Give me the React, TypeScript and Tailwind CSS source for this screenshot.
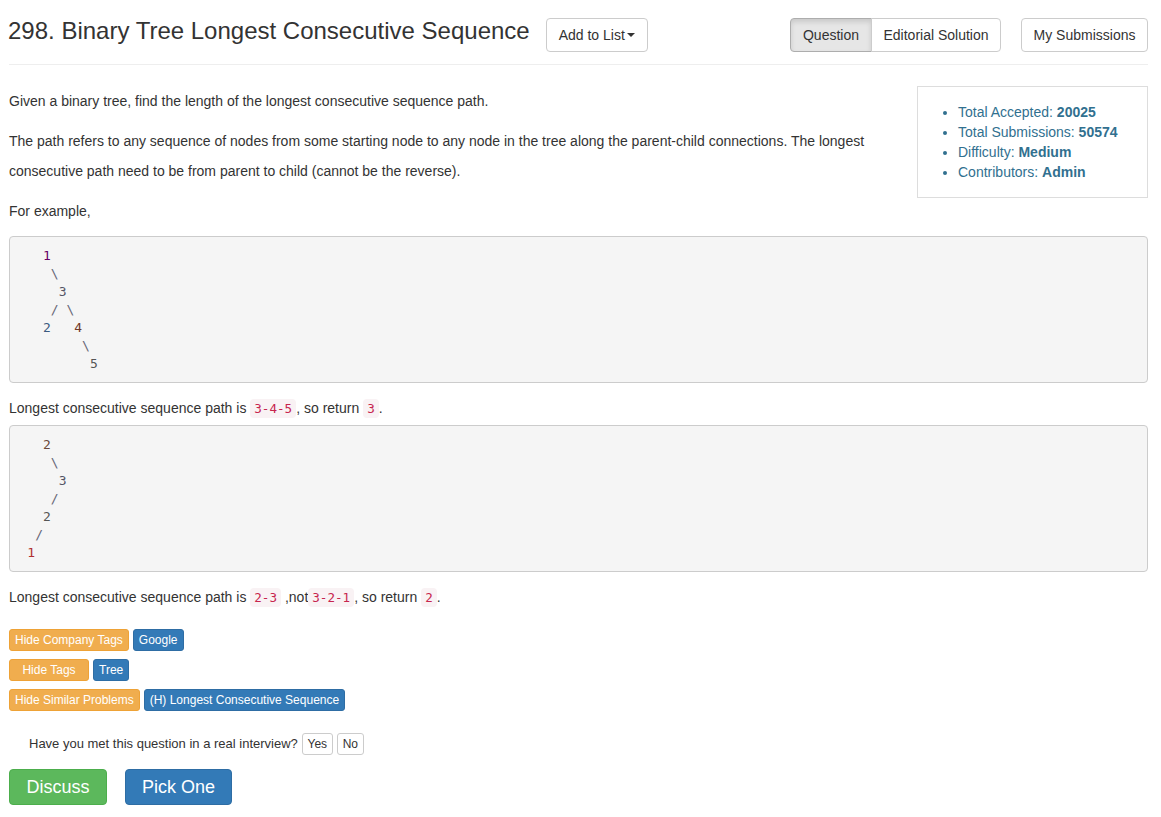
import React from "react";

const code = "px-[4px] py-[2px] rounded-[4px] bg-[#f9f2f4] text-[#c7254e] text-[12.6px] leading-[14px] [font-family:'DejaVu_Sans_Mono',monospace]";

function Pre({ lines, className = "" }: { lines: React.ReactNode[]; className?: string }) {
  return (
    <pre className={"bg-[#f5f5f5] border border-[#ccc] rounded-[4px] px-[9.5px] py-[9.5px] text-[13px] leading-[18px] text-[#555] [font-family:'DejaVu_Sans_Mono',monospace] whitespace-pre overflow-hidden " + className}>
      {lines.map((l, i) => (
        <div key={i}>{l}</div>
      ))}
    </pre>
  );
}

export default function App() {
  return (
    <div className="min-h-[817px] bg-white text-[#333] text-[14px] [font-family:'Liberation_Sans',Arial,sans-serif] pl-[9px] pr-[13px]">
      {/* header */}
      <div className="flex items-start pt-[14px] pb-[12px] border-b border-[#eee]">
        <h3 className="text-[24px] leading-[34px] text-[#333] -ml-[1px]">298. Binary Tree Longest Consecutive Sequence</h3>
        <button className="mt-[4px] ml-[16px] h-[34px] px-[12px] border border-[#ccc] rounded-[4px] bg-white text-[14px] text-[#333] flex items-center">
          Add to List
          <span className="ml-[2px] inline-block w-0 h-0 border-l-[4px] border-r-[4px] border-t-[4px] border-l-transparent border-r-transparent border-t-[#333]"></span>
        </button>
        <div className="flex-1" />
        <div className="mt-[4px] flex">
          <button className="h-[34px] w-[82px] border border-[#adadad] rounded-l-[4px] bg-[#e6e6e6] shadow-[inset_0_3px_5px_rgba(0,0,0,0.125)] text-[14px] text-[#333]">Question</button>
          <button className="h-[34px] w-[130px] -ml-[1px] border border-[#ccc] rounded-r-[4px] bg-white text-[14px] text-[#333]">Editorial Solution</button>
        </div>
        <button className="mt-[4px] ml-[20px] h-[34px] w-[127px] border border-[#ccc] rounded-[4px] bg-white text-[14px] text-[#333]">My Submissions</button>
      </div>

      {/* body */}
      <div className="pt-[21px]">
        <div className="float-right ml-[20px] w-[231px] border border-[#ddd] py-[15px]">
          <ul className="list-disc pl-[40px] text-[#31708f] leading-[20px] text-[14px]">
            <li>Total Accepted: <b>20025</b></li>
            <li>Total Submissions: <b>50574</b></li>
            <li>Difficulty: <b>Medium</b></li>
            <li>Contributors: <b>Admin</b></li>
          </ul>
        </div>
        <p className="leading-[30px] mb-[10px]">Given a binary tree, find the length of the longest consecutive sequence path.</p>
        <p className="leading-[30px] mb-[10px]">
          The path refers to any sequence of nodes from some starting node to any node in the tree along the parent-child connections. The longest consecutive path need to be from parent to child (cannot be the reverse).
        </p>
        <p className="leading-[30px] mb-[10px]">For example,</p>
        <div className="clear-both" />
        <Pre
          className="mb-[10px]"
          lines={[
            <>
              {"   "}
              <span className="text-[#606]">1</span>
            </>,
            <span className="text-[#667]">{"    \\"}</span>,
            <>
              {"     "}
              <span className="text-[#556]">3</span>
            </>,
            <span className="text-[#667]">{"    / \\"}</span>,
            <>
              {"   "}
              <span className="text-[#3b5a80]">2</span>
              {"   "}
              <span className="text-[#703828]">4</span>
            </>,
            <span className="text-[#667]">{"        \\"}</span>,
            <>
              {"         "}
              <span className="text-[#555]">5</span>
            </>,
          ]}
        />
        <p className="leading-[30px] mb-[2px]">
          Longest consecutive sequence path is <code className={code}>3-4-5</code>, so return <code className={code}>3</code>.
        </p>
        <Pre
          lines={[
            <>
              {"   "}
              <span className="text-[#6b4a3a]">2</span>
            </>,
            <span className="text-[#667]">{"    \\"}</span>,
            <>
              {"     "}
              <span className="text-[#556]">3</span>
            </>,
            <span className="text-[#667]">{"    /"}</span>,
            <>
              {"   "}
              <span className="text-[#555]">2</span>
            </>,
            <span className="text-[#667]">{"  /"}</span>,
            <>
              {" "}
              <span className="text-[#b03030]">1</span>
            </>,
          ]}
        />
        <p className="leading-[30px] mt-[10px]">
          Longest consecutive sequence path is <code className={code}>2-3</code> ,not<code className={code}>3-2-1</code>, so return <code className={code}>2</code>.
        </p>

        {/* tags */}
        <div className="mt-[17px] flex flex-col gap-[8px] text-[12px]">
          <div className="flex gap-[4px]">
            <span className="h-[22px] px-[5px] leading-[20px] rounded-[3px] bg-[#f0ad4e] border border-[#eea236] text-white">Hide Company Tags</span>
            <span className="h-[22px] px-[5px] leading-[20px] rounded-[3px] bg-[#337ab7] border border-[#2e6da4] text-white">Google</span>
          </div>
          <div className="flex gap-[4px]">
            <span className="h-[22px] w-[80px] text-center leading-[20px] rounded-[3px] bg-[#f0ad4e] border border-[#eea236] text-white">Hide Tags</span>
            <span className="h-[22px] px-[5px] leading-[20px] rounded-[3px] bg-[#337ab7] border border-[#2e6da4] text-white">Tree</span>
          </div>
          <div className="flex gap-[4px]">
            <span className="h-[22px] px-[5px] leading-[20px] rounded-[3px] bg-[#f0ad4e] border border-[#eea236] text-white">Hide Similar Problems</span>
            <span className="h-[22px] px-[5px] leading-[20px] rounded-[3px] bg-[#337ab7] border border-[#2e6da4] text-white">(H) Longest Consecutive Sequence</span>
          </div>
        </div>

        {/* interview */}
        <div className="mt-[22px] pl-[20px] flex items-center text-[13px]">
          <span>Have you met this question in a real interview?</span>
          <span className="ml-[4px] h-[22px] w-[31px] flex items-center justify-center border border-[#ccc] rounded-[3px] text-[12px]">Yes</span>
          <span className="ml-[4px] h-[22px] w-[27px] flex items-center justify-center border border-[#ccc] rounded-[3px] text-[12px]">No</span>
        </div>

        <div className="mt-[14px] flex gap-[18px]">
          <button className="h-[36px] w-[98px] rounded-[4px] bg-[#5cb85c] border border-[#4cae4c] text-white text-[18px]">Discuss</button>
          <button className="h-[36px] w-[107px] rounded-[4px] bg-[#337ab7] border border-[#2e6da4] text-white text-[18px]">Pick One</button>
        </div>
      </div>
    </div>
  );
}
